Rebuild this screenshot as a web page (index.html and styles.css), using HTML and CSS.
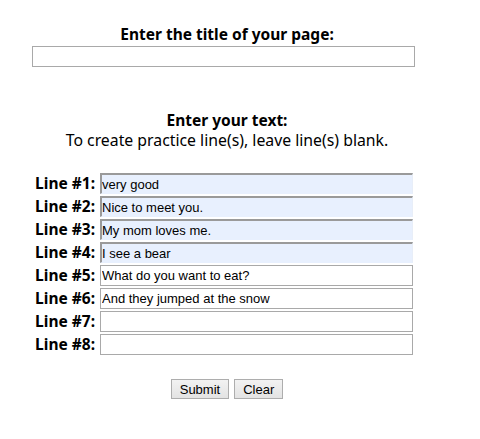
FILE: index.html
```html
<!DOCTYPE html>
<html>
<head>
<meta charset="utf-8">
<link rel="stylesheet" href="styles.css">
</head>
<body>
<form class="page">
  <div class="heading">Enter the title of your page:</div>
  <input class="title-input" type="text">
  <div class="heading text-heading">Enter your text:</div>
  <div class="hint">To create practice line(s), leave line(s) blank.</div>
  <div class="lines">
    <label class="lbl">Line #1:</label><input class="line filled" type="text" value="very good">
    <label class="lbl">Line #2:</label><input class="line filled" type="text" value="Nice to meet you.">
    <label class="lbl">Line #3:</label><input class="line filled" type="text" value="My mom loves me.">
    <label class="lbl">Line #4:</label><input class="line filled" type="text" value="I see a bear">
    <label class="lbl">Line #5:</label><input class="line" type="text" value="What do you want to eat?">
    <label class="lbl">Line #6:</label><input class="line" type="text" value="And they jumped at the snow">
    <label class="lbl">Line #7:</label><input class="line" type="text" value="">
    <label class="lbl">Line #8:</label><input class="line" type="text" value="">
  </div>
  <div class="buttons">
    <button class="btn" type="button">Submit</button>
    <button class="btn" type="button">Clear</button>
  </div>
</form>
</body>
</html>
```
FILE: styles.css
```css
html, body {
  margin: 0;
  padding: 0;
  background: #fff;
}
.page {
  width: 454px;
  padding-top: 23px;
  font-family: "Noto Sans", "Noto Sans CJK KR", sans-serif;
  color: #000;
  display: flex;
  flex-direction: column;
  align-items: center;
}
.heading {
  font-weight: bold;
  font-size: 15.5px;
  line-height: 22px;
}
.title-input {
  align-self: flex-start;
  margin-left: 32px;
  margin-top: 1px;
  width: 383px;
  height: 21px;
  box-sizing: border-box;
  border: 1px solid #a9a9a9;
  padding: 0 2px;
  font-family: "Liberation Sans", Arial, sans-serif;
  font-size: 13px;
  outline: none;
}
.text-heading {
  margin-top: 42px;
}
.hint {
  font-size: 15.8px;
  line-height: 21px;
  margin-top: -1px;
}
.lines {
  align-self: flex-start;
  margin-left: 35px;
  margin-top: 22px;
  display: grid;
  grid-template-columns: 60px 313px;
  column-gap: 5px;
  row-gap: 2px;
  align-items: center;
}
.lbl {
  font-weight: bold;
  font-size: 15.5px;
  line-height: 21px;
  text-align: right;
  white-space: nowrap;
}
.line {
  width: 313px;
  height: 21px;
  box-sizing: border-box;
  margin: 0;
  border: 1px solid #a9a9a9;
  padding: 0 2px 0 1px;
  font-family: "Liberation Sans", Arial, sans-serif;
  font-size: 13px;
  color: #000;
  background: #fff;
  outline: none;
}
.line.filled {
  background: #e8f0fe;
  border-top: 2px solid #9a9a9a;
  border-left: 2px solid #9a9a9a;
  border-right: 1px solid #e8eef8;
  border-bottom: 1px solid #e8f0fe;
  padding-left: 0;
}
.buttons {
  margin-top: 24px;
  display: flex;
  gap: 5px;
}
.btn {
  height: 20px;
  box-sizing: border-box;
  padding: 0 8px;
  font-family: "Liberation Sans", Arial, sans-serif;
  font-size: 13px;
  color: #000;
  border: 1px solid #adadad;
  border-radius: 0;
  background: linear-gradient(#f2f2f2, #e3e3e3);
}
```
